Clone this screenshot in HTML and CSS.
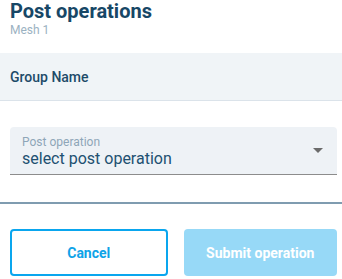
FILE: index.html
```html
<!doctype html>
<html lang="en">
  <head>
    <meta charset="UTF-8" />
    <meta name="viewport" content="width=device-width, initial-scale=1.0" />
    <title>Post operations</title>
    <link rel="stylesheet" href="styles.css">
  </head>
  <body>
    <div class="panel">
      <div class="header">
        <h1>Post operations</h1>
        <p class="subtitle">Mesh 1</p>
      </div>

      <div class="group">Group Name</div>

      <div class="field">
        <div class="select">
          <div class="select-text">
            <span class="select-label">Post operation</span>
            <span class="select-value">select post operation</span>
          </div>
          <svg class="arrow" width="10" height="5" viewBox="0 0 10 5">
            <path d="M0 0 L10 0 L5 5 Z" fill="#6b6b6b" />
          </svg>
        </div>
      </div>

      <div class="divider"></div>

      <div class="actions">
        <button class="btn btn-outline">Cancel</button>
        <button class="btn btn-primary" disabled>Submit operation</button>
      </div>
    </div>
  </body>
</html>
```

FILE: styles.css
```css
* {
  margin: 0;
  padding: 0;
  box-sizing: border-box;
}

body {
  font-family: Roboto, 'Liberation Sans', sans-serif;
  background: #ffffff;
  width: 342px;
  height: 279px;
  overflow: hidden;
}

.panel {
  display: flex;
  flex-direction: column;
}

.header {
  padding: 0 5px 0 10px;
  height: 53px;
}

h1 {
  color: #174766;
  font-size: 20px;
  font-weight: 700;
  line-height: 24px;
  margin-top: -1px;
}

.subtitle {
  color: #9bb2c2;
  font-size: 12px;
  line-height: 14px;
}

.group {
  background: #f0f4f7;
  border-bottom: 1px solid #dbe3ea;
  height: 48px;
  padding: 0 10px;
  display: flex;
  align-items: center;
  color: #1d4b69;
  font-size: 14px;
  font-weight: 500;
}

.field {
  padding: 26px 5px 0 10px;
}

.select {
  background: #eef2f6;
  border-radius: 4px 4px 0 0;
  border-bottom: 1px solid #8c8c8c;
  height: 48px;
  padding: 0 14px 0 12px;
  display: flex;
  align-items: center;
  justify-content: space-between;
}

.select-text {
  display: flex;
  flex-direction: column;
  padding-top: 2px;
}

.select-label {
  color: #8ea6b8;
  font-size: 12px;
  line-height: 14px;
}

.select-value {
  color: #215071;
  font-size: 16px;
  line-height: 19px;
}

.arrow {
  margin-top: -1px;
}

.divider {
  height: 2px;
  background: #7f9cb0;
  margin-top: 27px;
}

.actions {
  display: flex;
  gap: 16px;
  padding: 25px 5px 0 10px;
}

.btn {
  flex: 1;
  height: 47px;
  border-radius: 4px;
  font-family: Roboto, 'Liberation Sans', sans-serif;
  font-size: 14px;
  font-weight: 700;
  cursor: pointer;
}

.btn-outline {
  background: #ffffff;
  border: 2px solid #0aa6ee;
  color: #0ea3e8;
}

.btn-primary {
  background: #97d9f7;
  border: none;
  color: #ffffff;
}
```
